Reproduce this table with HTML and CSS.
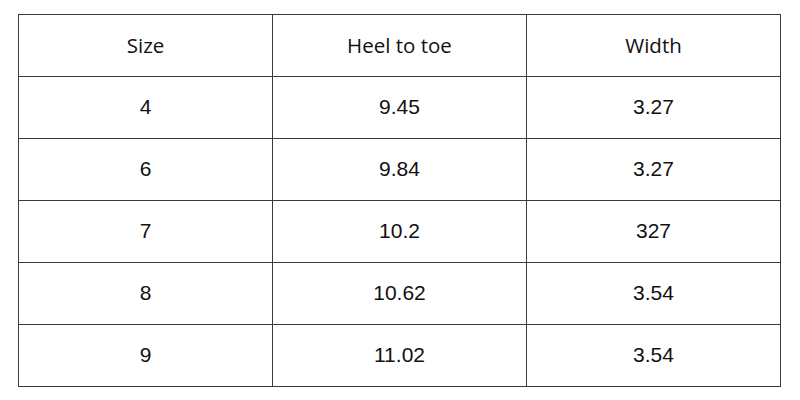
FILE: index.html
```html
<!DOCTYPE html>
<html>
<head>
<meta charset="utf-8">
<link rel="stylesheet" href="styles.css">
</head>
<body>
<table class="size-table">
  <thead>
    <tr><th>Size</th><th>Heel to toe</th><th>Width</th></tr>
  </thead>
  <tbody>
    <tr><td>4</td><td>9.45</td><td>3.27</td></tr>
    <tr><td>6</td><td>9.84</td><td>3.27</td></tr>
    <tr><td>7</td><td>10.2</td><td>327</td></tr>
    <tr><td>8</td><td>10.62</td><td>3.54</td></tr>
    <tr><td>9</td><td>11.02</td><td>3.54</td></tr>
  </tbody>
</table>
</body>
</html>
```
FILE: styles.css
```css
html, body {
  margin: 0;
  padding: 0;
  background: #fff;
}
body {
  padding: 14px 0 0 18px;
}
.size-table {
  border-collapse: collapse;
  table-layout: fixed;
  width: 763px;
  color: #111;
}
.size-table th,
.size-table td {
  border: 1px solid #3a3a3a;
  height: 59px;
  padding: 0 0 2px 0;
  text-align: center;
  vertical-align: middle;
}
.size-table th {
  font-family: "Open Sans", sans-serif;
  font-weight: 400;
  font-size: 20.5px;
}
.size-table td {
  font-family: "Liberation Sans", Arial, sans-serif;
  font-size: 21px;
}
```
